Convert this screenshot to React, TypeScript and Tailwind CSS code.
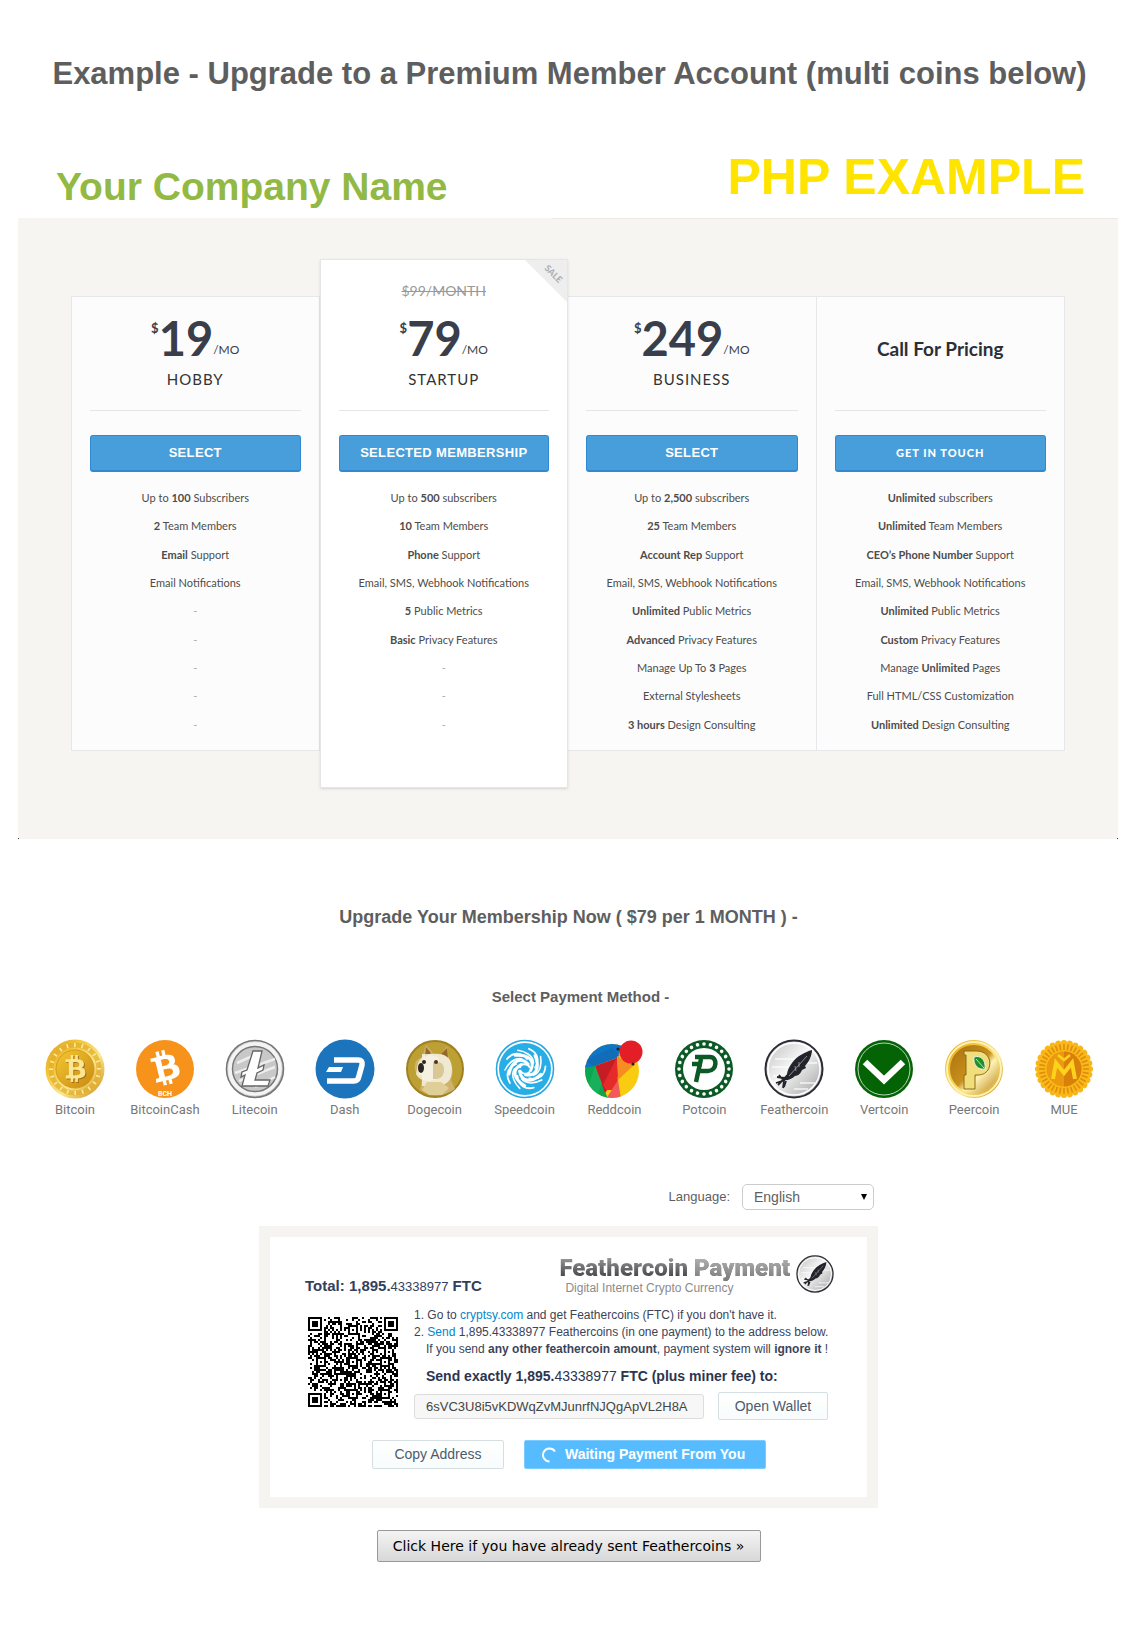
import type { ReactNode } from 'react';
import { FaBtc } from 'react-icons/fa';

type Plan = {
  name: string;
  price?: string;
  old?: string;
  action: string;
  features: string[];
};

const plans: Plan[] = [
  {
    name: 'HOBBY',
    price: '19',
    action: 'SELECT',
    features: ['Up to *100* Subscribers', '*2* Team Members', '*Email* Support', 'Email Notifications', '-', '-', '-', '-', '-'],
  },
  {
    name: 'STARTUP',
    price: '79',
    old: '$99/MONTH',
    action: 'SELECTED MEMBERSHIP',
    features: ['Up to *500* subscribers', '*10* Team Members', '*Phone* Support', 'Email, SMS, Webhook Notifications', '*5* Public Metrics', '*Basic* Privacy Features', '-', '-', '-'],
  },
  {
    name: 'BUSINESS',
    price: '249',
    action: 'SELECT',
    features: ['Up to *2,500* subscribers', '*25* Team Members', '*Account Rep* Support', 'Email, SMS, Webhook Notifications', '*Unlimited* Public Metrics', '*Advanced* Privacy Features', 'Manage Up To *3* Pages', 'External Stylesheets', '*3 hours* Design Consulting'],
  },
  {
    name: 'Call For Pricing',
    action: 'GET IN TOUCH',
    features: ['*Unlimited* subscribers', '*Unlimited* Team Members', '*CEO’s Phone Number* Support', 'Email, SMS, Webhook Notifications', '*Unlimited* Public Metrics', '*Custom* Privacy Features', 'Manage *Unlimited* Pages', 'Full HTML/CSS Customization', '*Unlimited* Design Consulting'],
  },
];

function Feature({ text }: { text: string }) {
  if (text === '-') return <li className="flex items-center justify-center text-[#aaa]">-</li>;
  return (
    <li className="flex items-center justify-center whitespace-pre">
      {text.split('*').map((part, i) => (i % 2 ? <b key={i}>{part}</b> : <span key={i}>{part}</span>))}
    </li>
  );
}

function PlanCard({ plan }: { plan: Plan }) {
  const featured = Boolean(plan.old);
  return (
    <article
      className={
        featured
          ? 'relative -my-[37px] flex flex-col border border-[#e6e6e9] bg-white px-[18px] py-[37px] shadow-sm'
          : 'flex flex-col border-y border-r border-[#e6e7ea] bg-[#fcfcfc] px-[18px] first:border-l'
      }
    >
      {featured && (
        <>
          <p className="absolute inset-x-0 top-[21px] text-center text-[14px] leading-[20px] text-[#999] line-through">{plan.old}</p>
          <div className="absolute top-0 right-0 size-[42px] bg-[#eee] [clip-path:polygon(0_0,100%_0,100%_100%)]">
            <span className="absolute top-[9px] right-[3px] rotate-45 text-[9px] leading-[10px] font-bold text-[#aaa]">SALE</span>
          </div>
        </>
      )}
      <header className="flex h-[114px] flex-col items-center border-b border-[#e2e6e8]">
        {plan.price ? (
          <>
            <div className="flex pt-[17px] text-[#3a3e4a]">
              <span className="pt-[5px] text-[13px] leading-[18px] font-bold">$</span>
              <strong className="text-[47px] leading-[48px]">{plan.price}</strong>
              <span className="self-end pb-[4px] text-[12px] leading-[16px]">/MO</span>
            </div>
            <h2 className="mt-[7px] text-[15px] leading-[20px] tracking-[1px] text-[#333]">{plan.name}</h2>
          </>
        ) : (
          <h2 className="pt-[40px] text-[19px] leading-[24px] font-bold text-[#2c2f36]">{plan.name}</h2>
        )}
      </header>
      <button
        type="button"
        className={
          plan.price
            ? 'mt-[24px] h-[37px] rounded-[3px] border border-b-2 border-[#3089d3] bg-[#479edb] font-["Liberation_Sans",sans-serif] text-[13px] font-bold tracking-wide text-white'
            : 'mt-[24px] h-[37px] rounded-[3px] border border-b-2 border-[#3089d3] bg-[#479edb] text-[11px] font-black tracking-[1px] text-white'
        }
      >
        {plan.action}
      </button>
      <ul className="mt-[12px] grid h-[255px] grid-rows-9 text-[11px] leading-[14px] text-[#4c4c4c]">
        {plan.features.map((f, i) => (
          <Feature key={i} text={f} />
        ))}
      </ul>
      <div className="h-[11px]" />
    </article>
  );
}

const ring = (n: number, draw: (angle: number) => ReactNode) => Array.from({ length: n }, (_, i) => draw((i * 360) / n));

function Gradients() {
  return (
    <svg className="absolute size-0" aria-hidden="true">
      <defs>
        <linearGradient id="gold" x1="0" y1="0" x2="1" y2="1">
          <stop offset="0" stopColor="#d99a15" />
          <stop offset=".3" stopColor="#f3c63c" />
          <stop offset=".6" stopColor="#fbe78c" />
          <stop offset="1" stopColor="#c7860c" />
        </linearGradient>
        <linearGradient id="goldIn" x1="0" y1="0" x2="1" y2="1">
          <stop offset="0" stopColor="#f4c832" />
          <stop offset="1" stopColor="#c98a12" />
        </linearGradient>
        <linearGradient id="silver" x1="0" y1="0" x2="1" y2="1">
          <stop offset="0" stopColor="#bdbdbd" />
          <stop offset=".45" stopColor="#f6f6f6" />
          <stop offset="1" stopColor="#9c9c9c" />
        </linearGradient>
        <linearGradient id="peer" x1="0" y1="0" x2="1" y2="1">
          <stop offset="0" stopColor="#a9710e" />
          <stop offset=".5" stopColor="#c8901c" />
          <stop offset=".62" stopColor="#fff4b8" />
          <stop offset="1" stopColor="#b98212" />
        </linearGradient>
      </defs>
    </svg>
  );
}

function FeatherArt() {
  return (
    <>
      <circle cx="30" cy="30" r="28.5" fill="url(#silver)" stroke="#2b2b33" strokeWidth="2" />
      <circle cx="30" cy="30" r="26" fill="none" stroke="#fff" strokeWidth="1.5" />
      <path d="M11 20h20M8 28h18M36 44h15M30 50h14M40 24h13M9 37h9" stroke="#fff" strokeWidth="1.4" opacity=".8" />
      <path d="M48 11c-7 2-15 6-20 13-3 4-5 8-5 12l-4 5c4 1 9-1 12-4 3 0 6-3 7-6l4-2-1-2c4-4 7-11 7-16z" fill="#23232b" />
      <path d="M44 15 14 46M20 39l-7-1m8 3-9 3m8-2-1 7m-1-9-3-4m7 6-2 6" stroke="#23232b" strokeWidth="1.8" fill="none" />
      <path d="M43 17 25 37M35 23v5M31 27l1 5" stroke="#aaa" strokeWidth=".8" />
    </>
  );
}

const coins: { name: string; art: ReactNode }[] = [
  {
    name: 'Bitcoin',
    art: (
      <>
        <circle cx="30" cy="30" r="29.5" fill="url(#gold)" />
        <circle cx="30" cy="30" r="24" fill="none" stroke="#e3ac28" strokeWidth="5" opacity=".7" />
        {ring(20, (a) => (
          <rect key={a} x="29" y="4" width="1.6" height="4" fill="#fbe9a0" transform={`rotate(${a} 30 30)`} />
        ))}
        <circle cx="30" cy="30" r="19" fill="url(#goldIn)" stroke="#d6971a" />
        <FaBtc x={18} y={17} size={27} color="#a86f10" />
        <FaBtc x={17} y={16} size={27} color="#fbe694" />
      </>
    ),
  },
  {
    name: 'BitcoinCash',
    art: (
      <>
        <circle cx="30" cy="30" r="29" fill="#f7931a" />
        <g transform="rotate(-14 30 28)">
          <FaBtc x={13} y={11} size={35} color="#fff" />
        </g>
        <text x="30" y="57" textAnchor="middle" fontSize="7" fontWeight="700" fill="#fff">BCH</text>
      </>
    ),
  },
  {
    name: 'Litecoin',
    art: (
      <>
        <circle cx="30" cy="30" r="28.5" fill="url(#silver)" stroke="#777" strokeWidth="1.6" />
        <circle cx="30" cy="30" r="25" fill="none" stroke="#f4f4f4" strokeWidth="3.5" />
        <circle cx="30" cy="30" r="22.5" fill="#c8c8c8" stroke="#777" strokeWidth="1.4" />
        <path d="M12 24 34 14M10 34l40-14M14 42l36-14M30 48l20-10" stroke="#ededed" strokeWidth="2.5" />
        <path d="M28 12h9l-4 17 6-3-1 5-6 3-2 7h15l-2 6H17l3-11-4 2 1-5 5-2z" fill="#fff" stroke="#666" strokeWidth="1.3" />
      </>
    ),
  },
  {
    name: 'Dash',
    art: (
      <>
        <circle cx="30" cy="30" r="29.5" fill="#1c75bc" />
        <path d="M19 21h24q5 0 4 5l-3 11q-1 5-5 5H12" fill="none" stroke="#fff" strokeWidth="5.5" />
        <path d="M14 28h14l-2 5H11z" fill="#fff" />
      </>
    ),
  },
  {
    name: 'Dogecoin',
    art: (
      <>
        <circle cx="30" cy="30" r="28" fill="#bda033" stroke="#a08122" strokeWidth="2" />
        <path d="M17 18 21 6l7 8 8 1 6-8 2 15c5 7 4 13 2 19l4 9c-12 9-26 7-35 1l2-11c-8-5-9-14-5-19z" fill="#cdb36c" />
        <path d="M13 24c4-10 16-10 21-4l-2 20c-8 4-18 2-21-5z" fill="#efe4c2" />
        <path d="m21 8 5 6-6 4zM42 9l-6 6 7 4z" fill="#94682a" />
        <path d="M17 15h15c11 0 15 6 15 16s-5 16-16 16H17V36h-3v-8h3z" fill="#f6f2e4" opacity=".85" />
        <path d="M28 23h4c5 0 7 3 7 8s-3 9-8 9h-3z" fill="#d9c795" />
        <path d="M22 43h14l8 6-7 7H24l-7-5z" fill="#dfcf97" />
        <ellipse cx="16" cy="29" rx="3" ry="5" fill="#2c2622" />
        <circle cx="19" cy="23" r="2" fill="#2c2622" />
        <circle cx="31" cy="23" r="2" fill="#4c3520" />
      </>
    ),
  },
  {
    name: 'Speedcoin',
    art: (
      <>
        <circle cx="30" cy="30" r="28.5" fill="#fff" stroke="#29a8e0" strokeWidth="1.6" />
        <circle cx="30" cy="30" r="26" fill="#27aee6" />
        {ring(5, (a) => (
          <g key={a} transform={`rotate(${a} 30 30)`} fill="none" stroke="#fff" strokeLinecap="round">
            <path d="M33 25C26 18 17 21 14 35" strokeWidth="3" />
            <path d="M27 20C19 18 13 25 10 31" strokeWidth="1.6" />
            <path d="M32 20C25 12 17 14 12 20" strokeWidth="1.8" />
          </g>
        ))}
        <path d="M25 29c0-5 8-5 10 0M35 31c0 5-8 5-10 0" fill="none" stroke="#fff" strokeWidth="2" />
      </>
    ),
  },
  {
    name: 'Reddcoin',
    art: (
      <>
        <clipPath id="redd"><circle cx="28" cy="32" r="27" /></clipPath>
        <g clipPath="url(#redd)">
          <path d="M0 0h60v60H0z" fill="#f9cc12" />
          <path d="M0 26 11 27l13 33H0z" fill="#0aa650" />
          <path d="M0 0h42l-9 19-22 8-11 2z" fill="#0d76c8" />
          <path d="m0 22 28-13 8 8-25 10z" fill="#1565ac" opacity=".6" />
          <path d="m11 27 22-8 1 18-13 17z" fill="#c61c26" />
          <path d="m33 18 1 33H22l-3-5z" fill="#e62a2a" />
          <path d="m33 17 17 9-16 15z" fill="#f68d22" />
          <path d="M22 60 34 41l3 19z" fill="#f05a5a" />
          <path d="m11 27 7 17-6 16H0z" fill="#27b968" opacity=".5" />
        </g>
        <circle cx="47" cy="13" r="11.5" fill="#e31e26" />
        <path d="m34 10 16 16-1-10-6-7z" fill="#e31e26" />
        <circle cx="34" cy="10" r="1.6" fill="#222" />
        <circle cx="49" cy="25" r="1.6" fill="#222" />
      </>
    ),
  },
  {
    name: 'Potcoin',
    art: (
      <>
        <circle cx="30" cy="30" r="29" fill="#0b5a26" />
        {ring(24, (a) => (
          <circle key={a} cx="30" cy="5" r="1.8" fill="#fff" transform={`rotate(${a} 30 30)`} />
        ))}
        <circle cx="30" cy="30" r="21" fill="#fff" />
        <path d="M21 18h15c8 0 7 14-2 14h-9m2-12-5 23M18 25h10" fill="none" stroke="#0b5a26" strokeWidth="4.5" />
      </>
    ),
  },
  { name: 'Feathercoin', art: <FeatherArt /> },
  {
    name: 'Vertcoin',
    art: (
      <>
        <circle cx="30" cy="30" r="29" fill="#046304" />
        <circle cx="30" cy="30" r="26" fill="none" stroke="#b8d5b8" strokeWidth="1" />
        <path d="m11 23 19 18 19-18" fill="none" stroke="#fff" strokeWidth="6.5" />
      </>
    ),
  },
  {
    name: 'Peercoin',
    art: (
      <>
        <circle cx="30" cy="30" r="29" fill="url(#gold)" />
        <circle cx="30" cy="30" r="27" fill="none" stroke="#fdf3b4" strokeWidth="2" />
        <circle cx="30" cy="30" r="24" fill="url(#peer)" />
        <path d="M20 12h13c17 0 17 24 1 24h-3v14h-11V36h2V16h-2z" fill="#f2dd7c" stroke="#8d6a16" />
        <path d="M30 18c6-2 12 2 11 12-7 1-12-4-11-12z" fill="#1d8f2c" stroke="#fff" strokeWidth=".8" />
        <path d="m32 20 8 9" stroke="#bfe6a8" strokeWidth="1" />
      </>
    ),
  },
  {
    name: 'MUE',
    art: (
      <>
        {ring(28, (a) => (
          <circle key={a} cx="30" cy="4" r="3" fill="#f8b617" transform={`rotate(${a} 30 30)`} />
        ))}
        <circle cx="30" cy="30" r="26" fill="#f9b916" />
        {ring(36, (a) => (
          <path key={a} d="M30 5v6" stroke="#e08c10" strokeWidth="1.6" transform={`rotate(${a} 30 30)`} />
        ))}
        <circle cx="30" cy="30" r="17.5" fill="#eb9a0f" />
        <path d="M30 12.5a17.5 17.5 0 0 1 0 35z" fill="#d97f0c" />
        <path d="m19 40 3-16 8 10 8-10 3 16" fill="none" stroke="#fdd21c" strokeWidth="4" />
        <path d="m24 16 6 5 6-5" fill="none" stroke="#fdd21c" strokeWidth="2.5" />
      </>
    ),
  },
];

const QR_SIZE = 45;

function squareRing(dx: number, dy: number) {
  return Math.max(Math.abs(dx), Math.abs(dy));
}

function qrModules() {
  let seed = 73;
  const cells: string[] = [];
  for (let y = 0; y < QR_SIZE; y++) {
    for (let x = 0; x < QR_SIZE; x++) {
      seed = (seed * 1103515245 + 12345) % 2147483648;
      let dark = (seed >> 12) % 100 < 51;
      if (x === 6 || y === 6) dark = (x + y) % 2 === 0;
      for (const [cx, cy] of [[22, 22], [22, 38], [38, 22], [38, 38], [6, 22], [22, 6]]) {
        const d = squareRing(x - cx, y - cy);
        if (d <= 2) dark = d !== 1;
      }
      for (const [cx, cy] of [[3, 3], [41, 3], [3, 41]]) {
        const d = squareRing(x - cx, y - cy);
        if (d <= 4) dark = d < 2 || d === 3;
      }
      if (dark) cells.push(`M${x} ${y}h1v1h-1z`);
    }
  }
  return cells.join('');
}

const qrPath = qrModules();

export default function App() {
  return (
    <main className="bg-white pb-[60px] font-['Liberation_Sans',sans-serif] text-[#5e5e5e]">
      <Gradients />
      <h1 className="pt-[54px] pl-[4px] text-center text-[31px] leading-[40px] font-bold">Example - Upgrade to a Premium Member Account (multi coins below)</h1>

      <div className="mt-[53px] flex h-[71px] items-start justify-between px-[50px]">
        <p className="pt-[16px] pl-[6px] text-[39px] leading-[48px] font-bold text-[#92b944]">Your Company Name</p>
        <p className="text-[50px] leading-[60px] font-bold text-[#ffe400]">PHP EXAMPLE</p>
      </div>

      <section className="mr-[17px] ml-[18px] bg-[#f6f5f1] font-[Lato,sans-serif]">
        <div className="ml-auto h-px w-[566px] bg-[#eceae3]" />
        <div className="mr-[53px] ml-[53px] grid grid-cols-4 pt-[77px] pb-[87px]">
          {plans.map((p) => (
            <PlanCard key={p.name} plan={p} />
          ))}
        </div>
        <div className="flex justify-between">
          <i className="size-px bg-[#333]" />
          <i className="size-px bg-[#333]" />
        </div>
      </section>

      <div className="pl-[2px]">
        <h2 className="mt-[66px] text-center text-[18px] leading-[24px] font-bold">Upgrade Your Membership Now ( $79 per 1 MONTH ) -</h2>
        <h3 className="mt-[58px] pl-[24px] text-center text-[15px] leading-[20px] font-bold">Select Payment Method -</h3>

        <nav className="mt-[32px] grid grid-cols-12 pr-[26px] pl-[28px]" aria-label="Payment method">
          {coins.map((c) => (
            <a key={c.name} href={`#${c.name}`} className="flex flex-col items-center font-[Roboto,sans-serif] text-[13px] leading-[22px] text-[#777]">
              <svg viewBox="0 0 60 60" className="size-[60px]" aria-hidden="true">{c.art}</svg>
              {c.name}
            </a>
          ))}
        </nav>

        <div className="mx-auto mt-[63px] w-[619px]">
          <div className="flex items-center justify-end pr-[4px]">
            <label htmlFor="language" className="mr-[12px] text-[13px]">Language:</label>
            <div className="relative">
              <select id="language" className="block h-[26px] w-[132px] appearance-none rounded-[5px] border border-[#ccc] bg-white px-[11px] text-[14px] text-[#5e5e5e]">
                <option>English</option>
              </select>
              <svg viewBox="0 0 6 6" className="pointer-events-none absolute top-[10px] right-[7px] size-[6px]" aria-hidden="true"><path d="M0 0h6L3 6z" /></svg>
            </div>
          </div>

          <section className="mt-[16px] border-[11px] border-[#f5f4f0] bg-white pt-[18px] pb-[28px] text-[#3b4459]">
            <div className="flex h-[42px] pr-[33px] pl-[35px]">
              <p className="pt-[22px] text-[15px] leading-[18px] font-bold text-[#33405c]">
                Total: 1,895.<span className="text-[13px] font-normal">43338977</span> FTC
              </p>
              <div className="ml-auto pr-[6px]">
                <p className="bg-gradient-to-b from-[#a4a4a6] to-[#38383c] bg-clip-text font-[Roboto,sans-serif] text-[24px] leading-[26px] font-black text-transparent">
                  Feathercoin <span className="bg-gradient-to-b from-[#bbb] to-[#777] bg-clip-text">Payment</span>
                </p>
                <p className="pl-[6px] text-[12px] leading-[14px] text-[#8b8b8b]">Digital Internet Crypto Currency</p>
              </div>
              <svg viewBox="0 0 60 60" className="size-[38px]" aria-hidden="true"><FeatherArt /></svg>
            </div>
            <div className="flex pt-[10px] pl-[38px]">
              <svg viewBox="0 0 45 45" className="mt-[10px] size-[90px]" shapeRendering="crispEdges" role="img" aria-label="Payment QR code">
                <path d={qrPath} />
              </svg>
              <div className="ml-[16px]">
                <ol className="text-[12px] leading-[17px]">
                  <li>1. Go to <a href="#cryptsy" className="text-[#0088cc]">cryptsy.com</a> and get Feathercoins (FTC) if you don't have it.</li>
                  <li>2. <a href="#send" className="text-[#0088cc]">Send</a> 1,895.43338977 Feathercoins (in one payment) to the address below.</li>
                  <li className="pl-[12px]">If you send <b>any other feathercoin amount</b>, payment system will <b>ignore it</b> !</li>
                </ol>
                <p className="pt-[9px] pl-[12px] text-[14px] leading-[18px] font-bold text-[#2b3550]">
                  Send exactly 1,895.<span className="font-normal">43338977</span> FTC (plus miner fee) to:
                </p>
                <div className="mt-[7px] flex items-center gap-[14px]">
                  <input aria-label="Address" readOnly value="6sVC3U8i5vKDWqZvMJunrfNJQgApVL2H8A" className="h-[25px] w-[290px] rounded-[3px] border border-[#ddd] bg-[#f7f7f7] px-[11px] text-[13px] text-[#444]" />
                  <button type="button" className="h-[28px] w-[110px] rounded-[2px] border border-[#d5dfe2] bg-gradient-to-b from-white to-[#f8fcfc] text-[14px] text-[#4d5a6d]">Open Wallet</button>
                </div>
              </div>
            </div>
            <div className="mt-[20px] flex gap-[20px] pl-[102px]">
              <button type="button" className="h-[29px] w-[132px] rounded-[2px] border border-[#d5dfe2] bg-gradient-to-b from-white to-[#f8fcfc] text-[14px] text-[#4d5a6d]">Copy Address</button>
              <button type="button" className="flex h-[29px] w-[242px] items-center gap-[8px] rounded-[2px] border border-[#7dccff] bg-[#57bcff] pl-[16px] text-[14px] font-bold text-white">
                <svg viewBox="0 0 16 16" className="size-[16px]" aria-hidden="true"><path d="M14 4.5A6.5 6.5 0 1 0 8.5 14.5" fill="none" stroke="#fff" strokeWidth="2" /></svg>
                Waiting Payment From You
              </button>
            </div>
          </section>
        </div>

        <div className="mt-[22px] flex justify-center">
          <button type="button" className="h-[32px] w-[384px] rounded-[2px] border border-[#999] bg-gradient-to-b from-[#f4f4f4] to-[#d8d8d8] font-['DejaVu_Sans',sans-serif] text-[14px] text-black">
            Click Here if you have already sent Feathercoins »
          </button>
        </div>
      </div>
    </main>
  );
}
